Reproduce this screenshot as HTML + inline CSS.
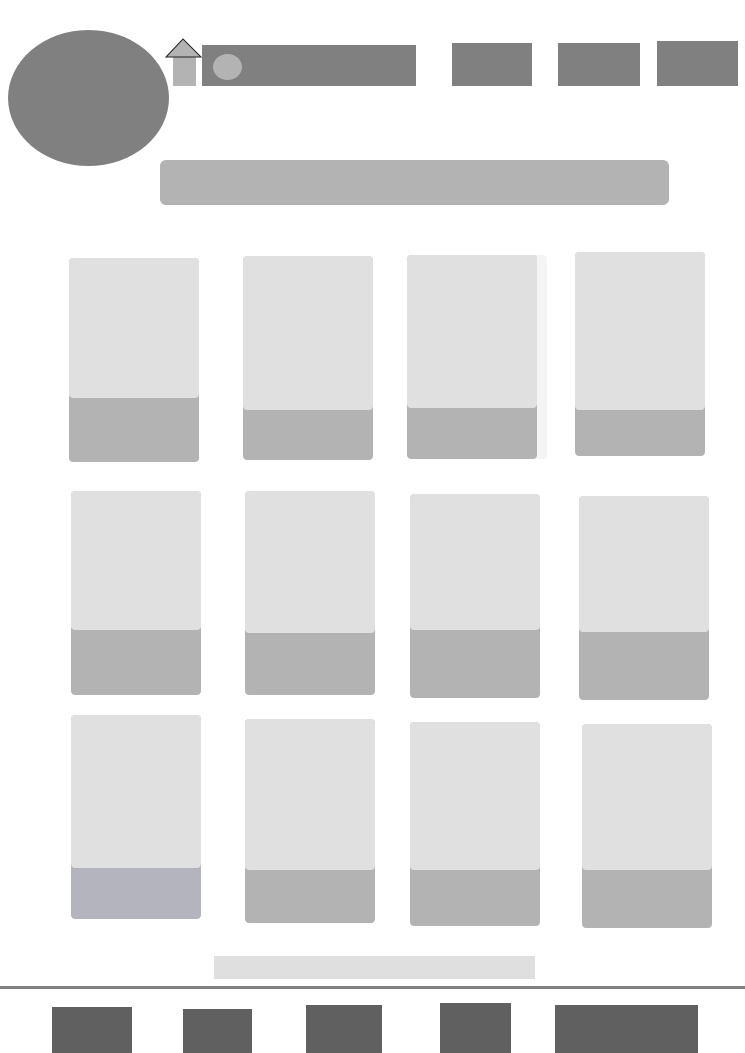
<!DOCTYPE html>
<html><head><style>
body{margin:0;width:745px;height:1053px;background:#fff;position:relative;overflow:hidden;font-family:"Liberation Sans",sans-serif}
div{position:absolute;box-sizing:border-box}
.d{background:#808080}
.f{background:#606060}
.c{background:#b3b3b3;border-radius:4px;overflow:hidden;width:130px;height:204px}
.c i{position:absolute;left:0;top:0;width:100%;background:#e0e0e0;border-radius:4px;display:block}
</style></head><body>
<div class="d" style="left:8px;top:30px;width:161px;height:136px;border-radius:50%"></div>
<div style="left:173px;top:57px;width:23px;height:29px;background:#b3b3b3"></div>
<svg style="position:absolute;left:164px;top:37px" width="40" height="22"><polygon points="2,20 19,2 37,20" fill="#b3b3b3" stroke="#222" stroke-width="1"/></svg>
<div class="d" style="left:202px;top:45px;width:214px;height:41px"></div>
<div style="left:213px;top:54px;width:29px;height:26px;border-radius:50%;background:#b3b3b3"></div>
<div class="d" style="left:452px;top:43px;width:80px;height:43px"></div>
<div class="d" style="left:558px;top:43px;width:82px;height:43px"></div>
<div class="d" style="left:657px;top:41px;width:81px;height:45px"></div>
<div style="left:160px;top:160px;width:509px;height:45px;background:#b3b3b3;border-radius:6px"></div>

<div class="c" style="left:69px;top:258px"><i style="height:140px"></i></div>
<div class="c" style="left:243px;top:256px"><i style="height:154px"></i></div>
<div class="c" style="left:407px;top:255px;box-shadow:10px 0 0 #f4f4f4"><i style="height:153px"></i></div>
<div class="c" style="left:575px;top:252px"><i style="height:158px"></i></div>

<div class="c" style="left:71px;top:491px"><i style="height:139px"></i></div>
<div class="c" style="left:245px;top:491px"><i style="height:142px"></i></div>
<div class="c" style="left:410px;top:494px"><i style="height:136px"></i></div>
<div class="c" style="left:579px;top:496px"><i style="height:136px"></i></div>

<div class="c" style="left:71px;top:715px;background:#b4b4be"><i style="height:153px"></i></div>
<div class="c" style="left:245px;top:719px"><i style="height:151px"></i></div>
<div class="c" style="left:410px;top:722px"><i style="height:148px"></i></div>
<div class="c" style="left:582px;top:724px"><i style="height:146px"></i></div>

<div style="left:214px;top:956px;width:321px;height:23px;background:#dfdfdf"></div>
<div class="d" style="left:0;top:986px;width:745px;height:3px"></div>
<div class="f" style="left:52px;top:1007px;width:80px;height:46px"></div>
<div class="f" style="left:183px;top:1009px;width:69px;height:44px"></div>
<div class="f" style="left:306px;top:1005px;width:76px;height:48px"></div>
<div class="f" style="left:440px;top:1003px;width:71px;height:50px"></div>
<div class="f" style="left:555px;top:1005px;width:143px;height:48px"></div>
</body></html>
